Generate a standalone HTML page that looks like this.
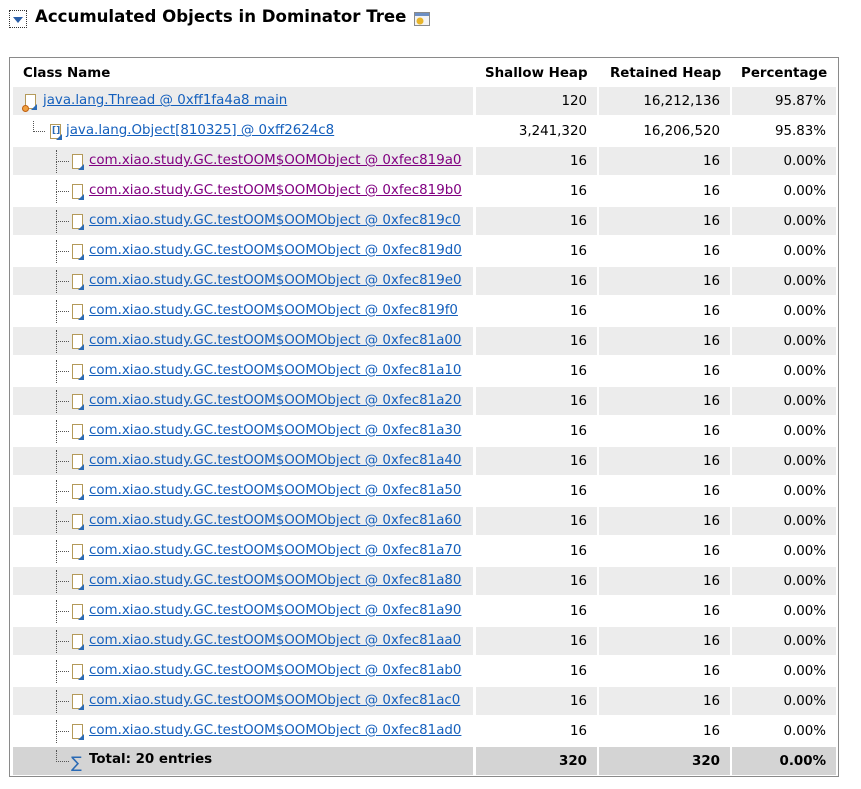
<!DOCTYPE html>
<html><head><meta charset="utf-8"><style>
body{margin:0;width:861px;height:789px;background:#fff;font-family:"DejaVu Sans","Liberation Sans",sans-serif;font-size:13.4px;color:#000;position:relative;overflow:hidden}
.h{position:absolute;left:35px;top:7px;font-size:16.6px;font-weight:bold;white-space:nowrap}
.tog{position:absolute;left:9px;top:10px;width:18px;height:18px;border:1px dotted #333;box-sizing:border-box}
.tog:after{content:"";position:absolute;left:3px;top:6px;border-left:5px solid transparent;border-right:5px solid transparent;border-top:6px solid #2b5fa8}
.box{position:absolute;left:9px;top:57px;width:830px;height:720px;border:1px solid #8a8a8a;box-sizing:border-box}
.r{position:absolute;left:0;width:861px;height:28px}
.c{position:absolute;top:0;height:28px;line-height:29px;white-space:nowrap}
.g .c{background:#ececec}
.t .c{background:#d4d4d4;font-weight:bold}
.c1{left:13px;width:460px}
.c2{left:476px;width:121px;text-align:right;box-sizing:border-box;padding-right:10px}
.c3{left:599px;width:131px;text-align:right;box-sizing:border-box;padding-right:10px}
.c4{left:732px;width:104px;text-align:right;box-sizing:border-box;padding-right:10px}
a{color:#1560bd;text-decoration:underline;position:absolute;top:-1px}
a.v{color:#800080}
.ic{position:absolute;top:7px;width:11px;height:15px;border:1px solid #b49a5a;background:#fff;box-sizing:border-box}
.ic:after{content:"";position:absolute;right:-2px;bottom:-2px;border-left:6px solid transparent;border-bottom:6px solid #2a6ab5}
.tl{position:absolute;border-left:1px dotted #555;border-bottom:1px dotted #555}
.hd{position:absolute;top:59px;font-weight:bold;line-height:30px}
</style></head><body>
<div class="tog"></div>
<div class="h">Accumulated Objects in Dominator Tree</div>
<svg style="position:absolute;left:413px;top:11px" width="18" height="16"><rect x="1.5" y="1.5" width="15" height="13" fill="#f4f4f4" stroke="#8a8a8a"/><rect x="2" y="2" width="14" height="3" fill="#6d8fc4"/><circle cx="7" cy="10" r="3.5" fill="#e8b52a"/></svg>
<div class="box"></div>
<div class="hd" style="left:23px">Class Name</div>
<div class="hd" style="left:485px">Shallow Heap</div>
<div class="hd" style="left:610px">Retained Heap</div>
<div class="hd" style="left:741px">Percentage</div>

<div class="r g" style="top:87px"><div class="c c1"><div class="ic" style="left:12px"></div><div style="position:absolute;left:9px;top:18px;width:7px;height:7px;border-radius:50%;background:#f0a040;border:1px solid #c06010;box-sizing:border-box"></div><a style="left:30px">java.lang.Thread @ 0xff1fa4a8 main</a></div><div class="c c2">120</div><div class="c c3">16,212,136</div><div class="c c4">95.87%</div></div>
<div class="r" style="top:117px"><div class="c c1"><div class="tl" style="left:20px;top:4px;width:11px;height:10px"></div><div class="ic" style="left:37px"><span style="position:absolute;left:1px;top:1px;font-size:9px;line-height:10px;color:#2a6ab5;font-weight:bold">[]</span></div><a style="left:53px">java.lang.Object[810325] @ 0xff2624c8</a></div><div class="c c2">3,241,320</div><div class="c c3">16,206,520</div><div class="c c4">95.83%</div></div>

<div id="rows"></div>
<script>
var h="",ad=["819a0","819b0","819c0","819d0","819e0","819f0","81a00","81a10","81a20","81a30","81a40","81a50","81a60","81a70","81a80","81a90","81aa0","81ab0","81ac0","81ad0"];
for(var i=0;i<20;i++){var t=147+30*i;h+='<div class="r'+(i%2==0?' g':'')+'" style="top:'+t+'px"><div class="c c1"><div class="tl" style="left:43px;top:3px;width:12px;height:11px"></div><div class="tl" style="left:43px;top:14px;width:0;height:12px;border-bottom:none"></div><div class="ic" style="left:59px"></div><a class="'+(i<2?'v':'')+'" style="left:76px">com.xiao.study.GC.testOOM$OOMObject @ 0xfec'+ad[i]+'</a></div><div class="c c2">16</div><div class="c c3">16</div><div class="c c4">0.00%</div></div>';}
h+='<div class="r t" style="top:747px"><div class="c c1"><div class="tl" style="left:43px;top:3px;width:12px;height:11px"></div><span style="position:absolute;left:58px;top:1px;font-weight:normal;color:#2a6ab5;font-size:16px">∑</span><span style="position:absolute;left:76px;top:-2px">Total: 20 entries</span></div><div class="c c2">320</div><div class="c c3">320</div><div class="c c4">0.00%</div></div>';
document.getElementById("rows").innerHTML=h;
</script>
</body></html>
